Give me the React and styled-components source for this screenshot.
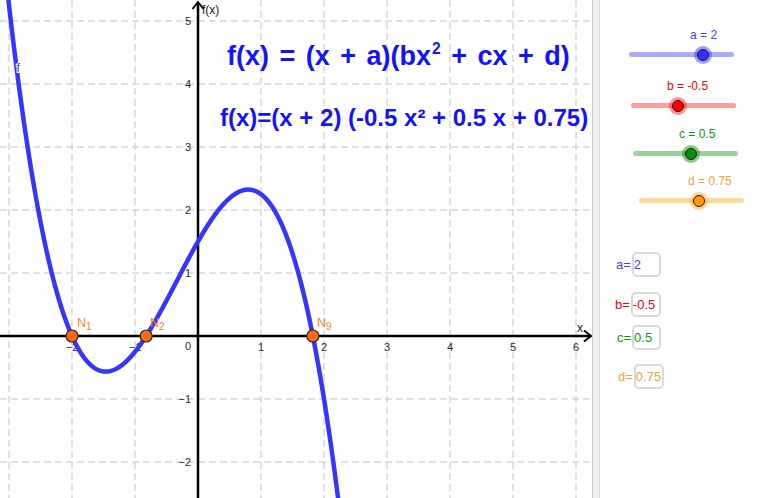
import React from 'react';
import styled, { createGlobalStyle } from 'styled-components';

const GlobalStyle = createGlobalStyle`
  html, body { margin: 0; padding: 0; background: #fff; }
  body { font-family: "Liberation Sans", Arial, sans-serif; }
  * { box-sizing: border-box; }
`;

const Frame = styled.div`
  display: flex;
  width: 758px;
  height: 498px;
  overflow: hidden;
  background: #fff;
`;

const GraphPanel = styled.div`
  position: relative;
  flex: none;
  width: 592px;
  height: 100%;
  overflow: hidden;
  background: #fff;
`;

const Chart = styled.svg`
  display: block;
  width: 592px;
  height: 498px;
  font-family: "Liberation Sans", Arial, sans-serif;
`;

const Divider = styled.div`
  flex: none;
  width: 8px;
  height: 100%;
  background: #efefef;
  border-left: 1px solid #cbcbcb;
  border-right: 1px solid #dcdcdc;
`;

const SidePanel = styled.div`
  flex: 1;
  display: flex;
  flex-direction: column;
  padding-top: 28px;
  background: #fff;
`;

const FormulaStack = styled.div`
  position: absolute;
  left: 220px;
  top: 43px;
  display: flex;
  flex-direction: column;
  align-items: flex-start;
  color: #1212ff;
  font-weight: bold;
  white-space: nowrap;
  pointer-events: none;
`;

const BigFormula = styled.div`
  margin-left: 7px;
  font-size: 27px;
  line-height: 27px;
  word-spacing: 3px;
`;

const Sup = styled.span`
  font-size: 0.58em;
  position: relative;
  top: -0.72em;
  margin-left: 1px;
`;

const ValueFormula = styled.div`
  margin-top: 33px;
  font-size: 24px;
  line-height: 24px;
`;

const Slider = styled.div`
  width: 105px;
  margin-left: ${(p) => p.$indent}px;
  margin-top: ${(p) => p.$mt}px;
`;

const SliderLabel = styled.div`
  margin-left: ${(p) => p.$lx}px;
  font-size: 12px;
  line-height: 14px;
  color: ${(p) => p.$color};
  white-space: nowrap;
`;

const Track = styled.div`
  position: relative;
  height: 5px;
  margin-top: 10px;
  border-radius: 3px;
  background: ${(p) => p.$color};
`;

const Knob = styled.div`
  position: absolute;
  top: 50%;
  width: 12px;
  height: 12px;
  margin: -6px 0 0 -6px;
  border-radius: 50%;
  background: ${(p) => p.$fill};
  border: 1px solid #1d1d1d;
  box-shadow: 0 0 0 3px ${(p) => p.$halo};
`;

const Field = styled.div`
  display: flex;
  align-items: center;
  gap: 1px;
  margin-left: ${(p) => p.$indent}px;
  margin-top: ${(p) => p.$mt}px;
`;

const FieldLabel = styled.span`
  font-size: 13px;
  line-height: 15px;
  color: ${(p) => p.$color};
`;

const FieldBox = styled.div`
  width: ${(p) => p.$w || 29}px;
  height: 25px;
  border: 2px solid #d9d9d9;
  border-radius: 5px;
  background: #fff;
  padding-left: 0;
  font-size: 13px;
  line-height: 21px;
  color: ${(p) => p.$color};
  white-space: nowrap;
`;

const OX = 198;
const OY = 336;
const S = 63;
const px = (x) => OX + S * x;
const py = (y) => OY - S * y;
const f = (x) => (x + 2) * (-0.5 * x * x + 0.5 * x + 0.75);

const curvePath = (() => {
  const pts = [];
  for (let x = -3.3; x <= 2.32; x += 0.01) {
    pts.push(`${px(x).toFixed(2)},${py(f(x)).toFixed(2)}`);
  }
  return 'M' + pts.join(' L');
})();

const vGrid = [-3, -2, -1, 1, 2, 3, 4, 5, 6];
const hGrid = [-2, -1, 1, 2, 3, 4, 5];
const minus = (k) => (k < 0 ? `\u2212${-k}` : `${k}`);

const roots = [
  { x: -2, label: '1', lx: 77 },
  { x: (1 - Math.sqrt(7)) / 2, label: '2', lx: 150 },
  { x: (1 + Math.sqrt(7)) / 2, label: '9', lx: 317 },
];

const sliders = [
  { name: 'a', value: 2, indent: 29, mt: 0, lx: 61, color: '#4040ff', track: '#aaaaff', fill: '#3030ff', halo: 'rgba(60,60,255,0.5)' },
  { name: 'b', value: -0.5, indent: 31, mt: 22, lx: 36, color: '#ff0000', track: '#ff9c9c', fill: '#ff0000', halo: 'rgba(255,40,40,0.5)' },
  { name: 'c', value: 0.5, indent: 33, mt: 19, lx: 46, color: '#129612', track: '#9ed19e', fill: '#0a8a0a', halo: 'rgba(20,150,20,0.5)' },
  { name: 'd', value: 0.75, indent: 39, mt: 18, lx: 49, color: '#f7a037', track: '#ffd89c', fill: '#ff9a10', halo: 'rgba(255,170,50,0.5)' },
];

const fields = [
  { name: 'a', text: '2', indent: 16, mt: 49, color: '#4040ff', w: 29 },
  { name: 'b', text: '-0.5', indent: 15, mt: 15, color: '#ff0000', w: 30 },
  { name: 'c', text: '0.5', indent: 17, mt: 8, color: '#129612', w: 29 },
  { name: 'd', text: '0.75', indent: 18, mt: 14, color: '#f7a037', w: 30 },
];

function Graph() {
  return (
    <Chart viewBox="0 0 592 498">
      {vGrid.map((k) => (
        <line key={`v${k}`} x1={px(k)} y1={0} x2={px(k)} y2={498} stroke="#c3c3c3" strokeWidth="1" strokeDasharray="7 4" />
      ))}
      {hGrid.map((k) => (
        <line key={`h${k}`} x1={0} y1={py(k)} x2={592} y2={py(k)} stroke="#c3c3c3" strokeWidth="1" strokeDasharray="7 4" />
      ))}

      <line x1={0} y1={OY} x2={590} y2={OY} stroke="#000" strokeWidth="2.5" />
      <path d="M584 330.5 L591 336 L584 341.5" fill="none" stroke="#000" strokeWidth="2" />
      <line x1={OX} y1={498} x2={OX} y2={3} stroke="#000" strokeWidth="2.5" />
      <path d="M192.5 9 L198 2 L203.5 9" fill="none" stroke="#000" strokeWidth="2" />

      <g fontSize="11" fill="#2a2a2a">
        {[-2, -1, 1, 2, 3, 4, 5, 6].map((k) => (
          <text key={`xl${k}`} x={px(k)} y={351} textAnchor="middle">{minus(k)}</text>
        ))}
        <text x={188} y={350} textAnchor="middle">0</text>
        {hGrid.map((k) => (
          <text key={`yl${k}`} x={191} y={py(k) + 4} textAnchor="end">{minus(k)}</text>
        ))}
      </g>
      <text x={577} y={332} fontSize="12" fill="#1a1a1a">x</text>
      <text x={202} y={14} fontSize="12" fill="#1a1a1a">f(x)</text>

      <path d={curvePath} fill="none" stroke="#3535ff" strokeWidth="4.5" strokeLinejoin="round" />
      <text
        x={16.5}
        y={72}
        fontSize="12"
        fill="#3b3bff"
        stroke="#ffffff"
        strokeWidth="2"
        paintOrder="stroke"
        style={{ paintOrder: 'stroke' }}
      >
        f
      </text>

      {roots.map((r) => (
        <g key={r.label}>
          <circle cx={px(r.x)} cy={OY} r={6} fill="#ff6a10" stroke="#2a2a2a" strokeWidth="1.2" />
          <text x={r.lx} y={327} fontSize="12.5" fill="#ff8418">
            N<tspan fontSize="10" dy="3">{r.label}</tspan>
          </text>
        </g>
      ))}
    </Chart>
  );
}

export default function App() {
  return (
    <>
      <GlobalStyle />
      <Frame>
        <GraphPanel>
          <Graph />
          <FormulaStack>
            <BigFormula>
              f(x) = (x + a)(bx<Sup>2</Sup> + cx + d)
            </BigFormula>
            <ValueFormula>f(x)=(x + 2) (-0.5 x² + 0.5 x + 0.75)</ValueFormula>
          </FormulaStack>
        </GraphPanel>
        <Divider />
        <SidePanel>
          {sliders.map((s) => (
            <Slider key={s.name} $indent={s.indent} $mt={s.mt}>
              <SliderLabel $lx={s.lx} $color={s.color}>
                {s.name} = {s.value}
              </SliderLabel>
              <Track $color={s.track}>
                <Knob
                  $fill={s.fill}
                  $halo={s.halo}
                  style={{ left: `${((s.value + 5) / 10) * 105}px` }}
                />
              </Track>
            </Slider>
          ))}
          {fields.map((fl) => (
            <Field key={fl.name} $indent={fl.indent} $mt={fl.mt}>
              <FieldLabel $color={fl.color}>{fl.name}=</FieldLabel>
              <FieldBox $color={fl.color} $w={fl.w}>{fl.text}</FieldBox>
            </Field>
          ))}
        </SidePanel>
      </Frame>
    </>
  );
}
